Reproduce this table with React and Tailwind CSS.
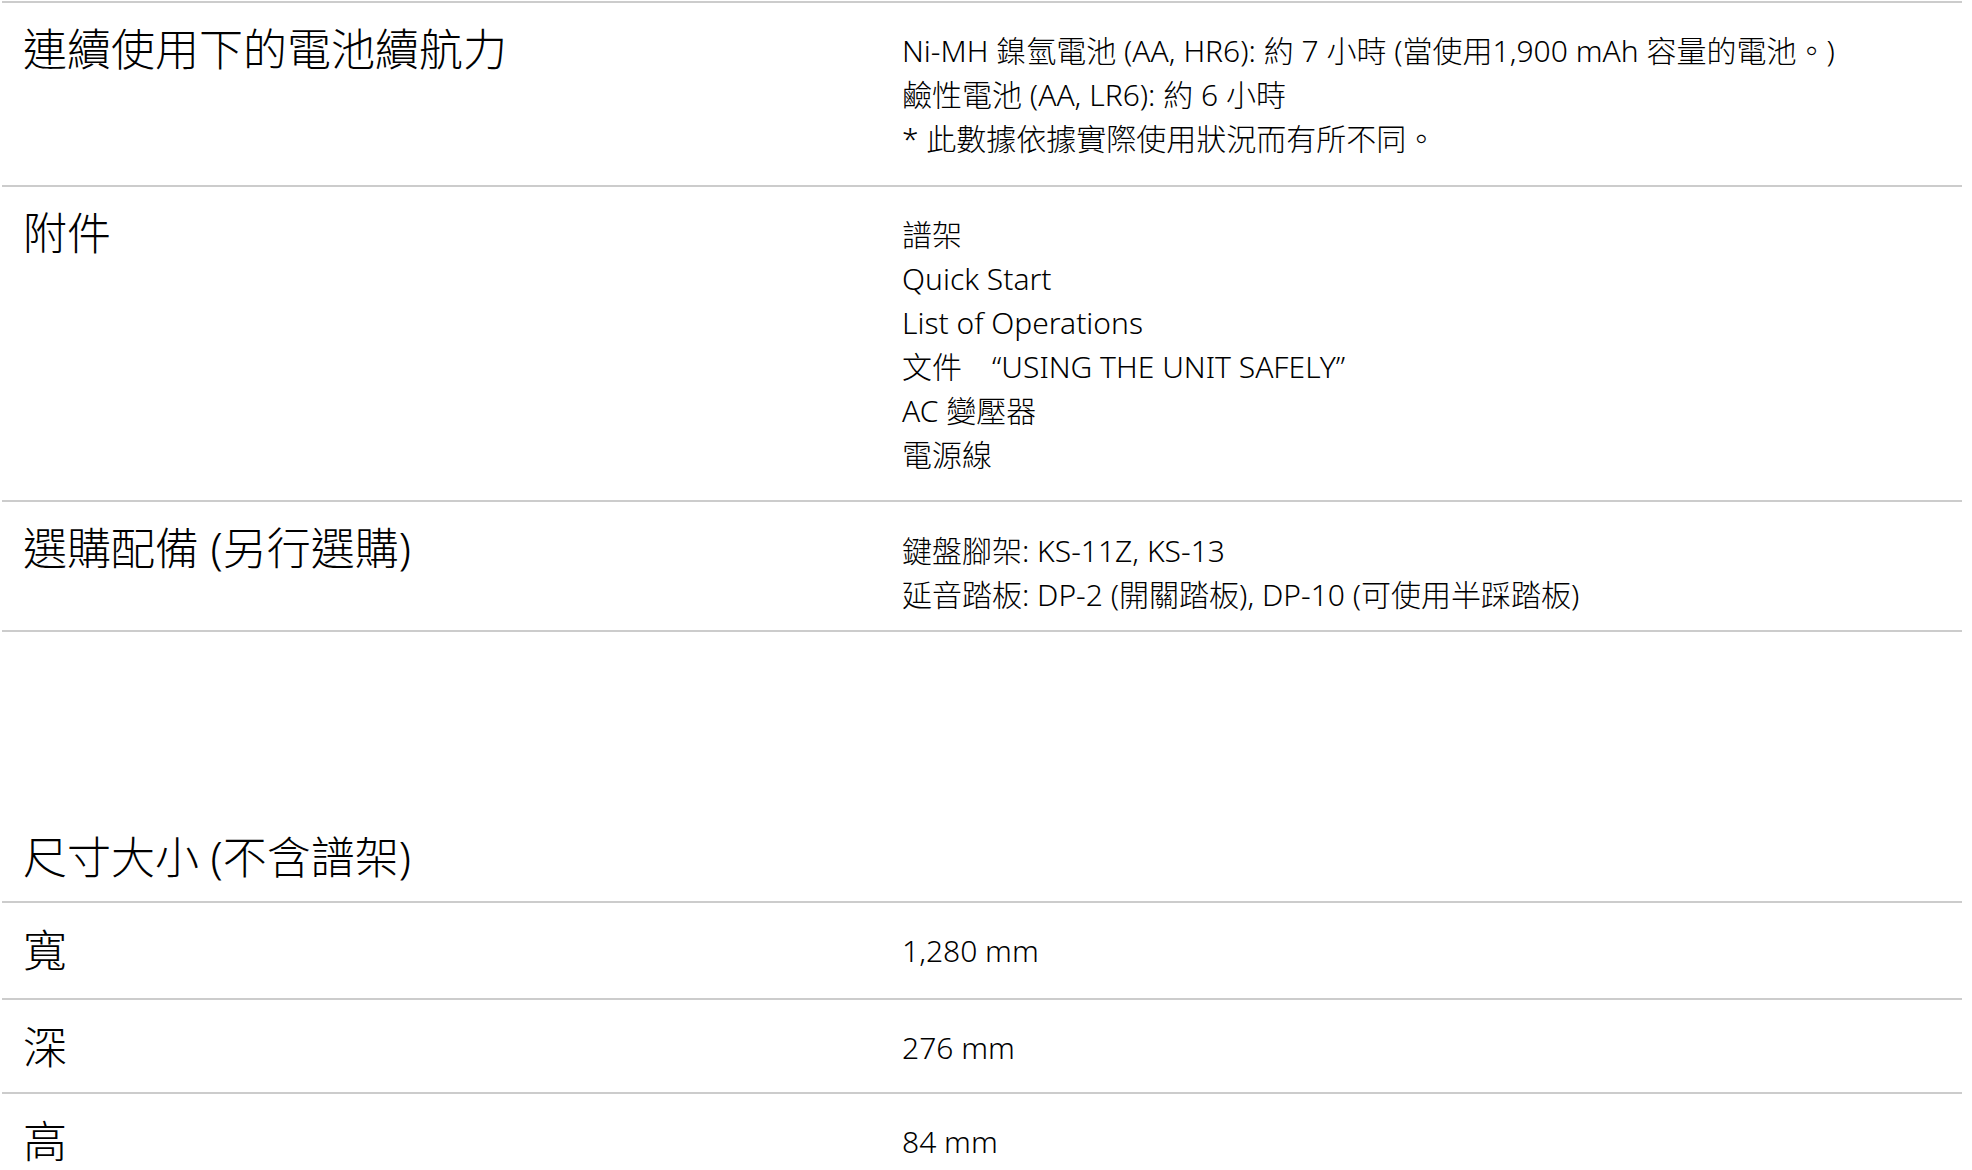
import React from "react";

const font = {
  fontFamily: '"Noto Sans", "Noto Sans CJK TC", sans-serif',
};

const specs = [
  {
    label: "連續使用下的電池續航力",
    values: [
      "Ni-MH 鎳氫電池 (AA, HR6): 約 7 小時 (當使用1,900 mAh 容量的電池。)",
      "鹼性電池 (AA, LR6): 約 6 小時",
      "* 此數據依據實際使用狀況而有所不同。",
    ],
    height: "h-[184px]",
    valuePad: "pt-[26px]",
  },
  {
    label: "附件",
    values: [
      "譜架",
      "Quick Start",
      "List of Operations",
      "文件　“USING THE UNIT SAFELY”",
      "AC 變壓器",
      "電源線",
    ],
    height: "h-[315px]",
    valuePad: "pt-[26px]",
  },
  {
    label: "選購配備 (另行選購)",
    values: ["鍵盤腳架: KS-11Z, KS-13", "延音踏板: DP-2 (開關踏板), DP-10 (可使用半踩踏板)"],
    height: "h-[130px]",
    valuePad: "pt-[27px]",
  },
];

const dimensions = [
  { label: "寬", value: "1,280 mm", height: "h-[97px]" },
  { label: "深", value: "276 mm", height: "h-[94px]" },
  { label: "高", value: "84 mm", height: "h-[97px]" },
];

function SpecRow({ label, values, height, valuePad }) {
  return (
    <div className={`flex border-t-2 border-[#cccccc] ${height}`}>
      <div className="w-[900px] shrink-0 pl-[21px] pt-[19px] text-[44px] leading-[55px]">
        {label}
      </div>
      <div className={`${valuePad} text-[30px] leading-[44px]`}>
        {values.map((v) => (
          <div key={v}>{v}</div>
        ))}
      </div>
    </div>
  );
}

export default function App() {
  return (
    <div
      className="bg-white text-black font-light pt-px pl-[2px] pr-[10px] min-h-[1170px]"
      style={font}
    >
      {specs.map((s) => (
        <SpecRow key={s.label} {...s} />
      ))}

      <div className="border-t-2 border-[#cccccc] pt-[198px] pb-[16px] pl-[21px] text-[44px] leading-[55px]">
        尺寸大小 (不含譜架)
      </div>

      {dimensions.map((d) => (
        <div key={d.label} className={`flex border-t-2 border-[#cccccc] ${d.height}`}>
          <div className="w-[900px] shrink-0 pl-[21px] pt-[20px] text-[44px] leading-[55px]">
            {d.label}
          </div>
          <div className="pt-[26px] text-[30px] leading-[44px]">{d.value}</div>
        </div>
      ))}
    </div>
  );
}
